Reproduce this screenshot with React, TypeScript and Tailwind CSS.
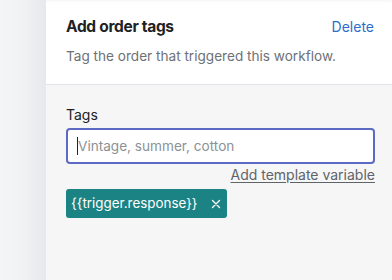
import React from "react";

function CloseIcon() {
  return (
    <svg viewBox="0 0 20 20" className="h-[14px] w-[14px]" fill="none" stroke="currentColor" strokeWidth={1.8} strokeLinecap="round">
      <path d="M5 5l10 10M15 5L5 15" />
    </svg>
  );
}

export default function App() {
  return (
    <div
      className="flex h-[280px] w-[392px] overflow-hidden bg-[#f6f6f7]"
      style={{ fontFamily: "Inter, 'Noto Sans', sans-serif" }}
    >
      {/* Left canvas edge */}
      <div className="w-[46px] shrink-0 bg-gradient-to-r from-[#f4f5f7] via-[#f1f2f4] to-[#e6e8eb]" />

      {/* Side panel */}
      <div className="flex flex-1 flex-col">
        <div className="h-[85px] border-b border-[#dfe3e8] bg-white pl-5 pr-[18px] pt-[15px] shadow-[inset_0_3px_3px_-2px_rgba(0,0,0,0.05)]">
          <div className="flex items-center justify-between">
            <h2 className="text-[15.5px] font-bold leading-6 tracking-[-0.02em] text-[#202223]">
              Add order tags
            </h2>
            <button className="text-[14px] leading-6 text-[#2c6ecb]">Delete</button>
          </div>
          <p className="mt-[7px] text-[13.6px] leading-5 text-[#6d7175]">
            Tag the order that triggered this workflow.
          </p>
        </div>

        <div className="flex-1 pl-5 pr-[17px] pt-[20px]">
          <label className="block text-[14px] leading-5 text-[#202223]">Tags</label>
          <div className="mt-[3px] flex h-[36px] items-center rounded-[4px] border-2 border-[#5c6ac4] bg-white pl-[9px]">
            <span className="h-[18px] w-px bg-[#202223]" />
            <span className="text-[13.6px] text-[#8c9196]">Vintage, summer, cotton</span>
          </div>
          <div className="mt-[1px] flex justify-end">
            <button className="text-[14px] leading-5 text-[#5e646a] underline underline-offset-2">
              Add template variable
            </button>
          </div>
          <div className="mt-[4px] flex">
            <span className="flex h-[29px] items-center gap-[11px] rounded-[3px] bg-[#1c8385] pl-[5px] pr-[4px] text-[13.4px] text-white">
              {"{{trigger.response}}"}
              <CloseIcon />
            </span>
          </div>
        </div>
      </div>
    </div>
  );
}
